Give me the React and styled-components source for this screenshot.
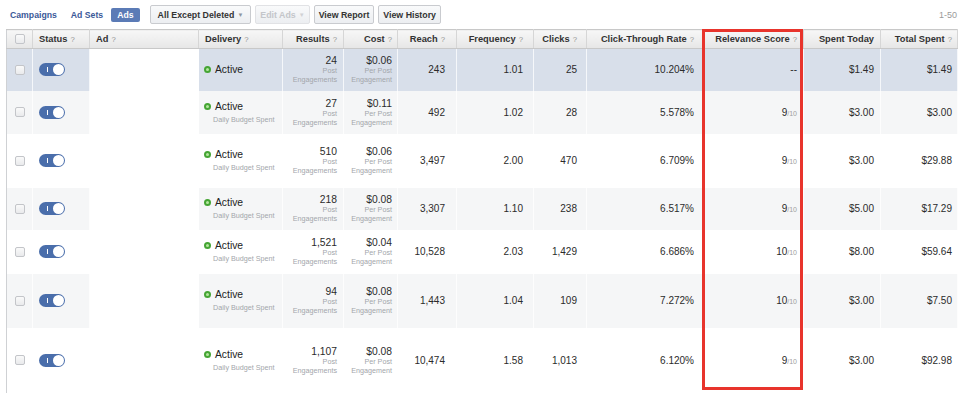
import React from 'react'
import styled, { createGlobalStyle } from 'styled-components'

const GlobalStyle = createGlobalStyle`
  body {
    margin: 0;
    background: #fff;
    font-family: "Liberation Sans", Arial, Helvetica, sans-serif;
    color: #333;
  }
`

const Page = styled.div`
  width: 960px;
  height: 393px;
  overflow: hidden;
  padding-left: 6px;
  box-sizing: border-box;
`

const Toolbar = styled.div`
  height: 29px;
  display: flex;
  align-items: center;
  padding-left: 4px;
  padding-right: 3px;
`

const LevelTab = styled.span`
  font-size: 8.7px;
  font-weight: bold;
  color: ${p => (p.active ? '#fff' : '#3b5998')};
  background: ${p => (p.active ? '#5b7bb6' : 'transparent')};
  border-radius: 2px;
  padding: ${p => (p.active ? '2px 6px' : '0')};
  margin-right: ${p => p.gap}px;
`

const Button = styled.span`
  display: inline-flex;
  align-items: center;
  height: 19px;
  box-sizing: border-box;
  padding: 0 ${p => p.pad || 4}px;
  margin-right: 4px;
  font-size: 8.8px;
  font-weight: bold;
  color: ${p => (p.disabled ? '#c4c6ca' : '#333')};
  background: linear-gradient(#f9fafb, #eceef1);
  border: 1px solid ${p => (p.disabled ? '#e1e2e5' : '#c9cbcf')};
  border-radius: 2px;
`

const Caret = styled.span`
  font-size: 6px;
  margin-left: 3px;
  color: ${p => (p.disabled ? '#d0d1d4' : '#8d949e')};
`

const Paging = styled.span`
  margin-left: auto;
  font-size: 9px;
  color: #9a9a9a;
`

const TableWrap = styled.div`
  position: relative;
  width: 951px;
`

const Table = styled.table`
  width: 951px;
  table-layout: fixed;
  border-collapse: collapse;
  border-left: 1px solid #cfd1d4;
`

const HeadCell = styled.th`
  height: 18px;
  padding: 0 ${p => p.pr || 6}px 0 ${p => p.pl || 6}px;
  text-align: ${p => p.align || 'right'};
  font-size: 9.3px;
  font-weight: bold;
  color: #333;
  white-space: nowrap;
  background: linear-gradient(#f7f7f7, #e6e6e6);
  border-top: 1px solid #c8c8c8;
  border-bottom: 1px solid #c8c8c8;
  border-right: 1px solid #d6d6d6;
`

const Help = styled.span`
  font-weight: normal;
  font-size: 7.8px;
  color: #959595;
  margin-left: 3px;
`

const Row = styled.tr`
  height: ${p => p.h}px;
  background: ${p => (p.selected ? '#d8dfea' : p.shade ? '#f5f6f7' : '#fff')};
`

const Cell = styled.td`
  padding: 0 ${p => p.pr || 6}px 0 ${p => p.pl || 6}px;
  text-align: ${p => p.align || 'right'};
  vertical-align: middle;
  font-size: 10px;
  color: #2b2b2b;
  white-space: nowrap;
  border-right: 1px solid rgba(255, 255, 255, 0.75);
  background: ${p => (p.blank ? '#fff' : 'transparent')};
`

const Check = styled.span`
  display: block;
  width: 8px;
  height: 8px;
  margin: 0 auto;
  border: 1px solid #c3c5c9;
  border-radius: 2px;
  background: linear-gradient(#fafafa, #e9eaec);
`

const Toggle = styled.span`
  position: relative;
  display: block;
  width: 26px;
  height: 13px;
  border-radius: 7px;
  background: #4a6eab;
  &::before {
    content: '';
    position: absolute;
    left: 8px;
    top: 4px;
    width: 1px;
    height: 5px;
    background: #fff;
  }
  &::after {
    content: '';
    position: absolute;
    right: 1px;
    top: 1px;
    width: 11px;
    height: 11px;
    border-radius: 50%;
    background: #fff;
  }
`

const Status = styled.div`
  display: flex;
  align-items: center;
  font-size: 10.3px;
  color: #222;
`

const Dot = styled.span`
  width: 3px;
  height: 3px;
  border-radius: 50%;
  background: #b5e6a0;
  border: 2px solid #45a534;
  margin-right: 4px;
`

const SubNote = styled.div`
  font-size: 7.2px;
  line-height: 9px;
  color: #a3a6ab;
  margin-top: ${p => p.gap || 0}px;
  padding-left: ${p => p.indent || 0}px;
`

const Main = styled.div`
  font-size: 10.3px;
  line-height: 11px;
`

const Score = styled.span`
  font-size: 10px;
`

const OutOf = styled.span`
  font-size: 7px;
  color: #a0a0a0;
`

const Highlight = styled.div`
  position: absolute;
  left: 696px;
  top: 0;
  width: 101px;
  height: 361px;
  border: 3px solid #e8342c;
  box-sizing: border-box;
  pointer-events: none;
`

const columns = [
  { key: 'check', w: 26, align: 'center' },
  { key: 'status', w: 57, label: 'Status', align: 'left', help: true },
  { key: 'ad', w: 109, label: 'Ad', align: 'left', help: true },
  { key: 'delivery', w: 84, label: 'Delivery', align: 'left', help: true },
  { key: 'results', w: 61, label: 'Results', help: true, pr: 6 },
  { key: 'cost', w: 54, label: 'Cost', help: true, pr: 5 },
  { key: 'reach', w: 59, label: 'Reach', help: true, pr: 11 },
  { key: 'freq', w: 77, label: 'Frequency', help: true, pr: 10 },
  { key: 'clicks', w: 53, label: 'Clicks', help: true, pr: 9 },
  { key: 'ctr', w: 117, label: 'Click-Through Rate', help: true, pr: 9 },
  { key: 'rel', w: 100, label: 'Relevance Score', help: true, pr: 6 },
  { key: 'today', w: 77, label: 'Spent Today', pr: 6 },
  { key: 'total', w: 77, label: 'Total Spent', help: true, pr: 5 },
]

const rows = [
  { h: 42, selected: true, results: '24', cost: '$0.06', reach: '243', freq: '1.01', clicks: '25', ctr: '10.204%', rel: null, today: '$1.49', total: '$1.49', budget: false },
  { h: 43, shade: true, results: '27', cost: '$0.11', reach: '492', freq: '1.02', clicks: '28', ctr: '5.578%', rel: 9, today: '$3.00', total: '$3.00', budget: true },
  { h: 54, results: '510', cost: '$0.06', reach: '3,497', freq: '2.00', clicks: '470', ctr: '6.709%', rel: 9, today: '$3.00', total: '$29.88', budget: true },
  { h: 42, shade: true, results: '218', cost: '$0.08', reach: '3,307', freq: '1.10', clicks: '238', ctr: '6.517%', rel: 9, today: '$5.00', total: '$17.29', budget: true },
  { h: 44, results: '1,521', cost: '$0.04', reach: '10,528', freq: '2.03', clicks: '1,429', ctr: '6.686%', rel: 10, today: '$8.00', total: '$59.64', budget: true },
  { h: 54, shade: true, results: '94', cost: '$0.08', reach: '1,443', freq: '1.04', clicks: '109', ctr: '7.272%', rel: 10, today: '$3.00', total: '$7.50', budget: true },
  { h: 65, results: '1,107', cost: '$0.08', reach: '10,474', freq: '1.58', clicks: '1,013', ctr: '6.120%', rel: 9, today: '$3.00', total: '$92.98', budget: true },
]

const col = key => columns.find(c => c.key === key)

const AdRow = ({ r }) => (
  <Row h={r.h} selected={r.selected} shade={r.shade}>
    <Cell align="center" pl={0} pr={0}><Check /></Cell>
    <Cell align="left"><Toggle /></Cell>
    <Cell blank />
    <Cell align="left" pl={5}>
      <Status><Dot />Active</Status>
      {r.budget && <SubNote gap={3} indent={9}>Daily Budget Spent</SubNote>}
    </Cell>
    <Cell pr={col('results').pr}>
      <Main>{r.results}</Main>
      <SubNote>Post</SubNote>
      <SubNote>Engagements</SubNote>
    </Cell>
    <Cell pr={col('cost').pr}>
      <Main>{r.cost}</Main>
      <SubNote>Per Post</SubNote>
      <SubNote>Engagement</SubNote>
    </Cell>
    <Cell pr={col('reach').pr}>{r.reach}</Cell>
    <Cell pr={col('freq').pr}>{r.freq}</Cell>
    <Cell pr={col('clicks').pr}>{r.clicks}</Cell>
    <Cell pr={col('ctr').pr}>{r.ctr}</Cell>
    <Cell pr={col('rel').pr}>
      {r.rel == null ? '--' : <><Score>{r.rel}</Score><OutOf>/10</OutOf></>}
    </Cell>
    <Cell pr={col('today').pr}>{r.today}</Cell>
    <Cell pr={col('total').pr}>{r.total}</Cell>
  </Row>
)

export default function App() {
  return (
    <Page>
      <GlobalStyle />
      <Toolbar>
        <LevelTab gap={14}>Campaigns</LevelTab>
        <LevelTab gap={8}>Ad Sets</LevelTab>
        <LevelTab active gap={10}>Ads</LevelTab>
        <Button pad={7}>All Except Deleted<Caret>▼</Caret></Button>
        <Button disabled pad={4}>Edit Ads<Caret disabled>▼</Caret></Button>
        <Button>View Report</Button>
        <Button>View History</Button>
        <Paging>1-50</Paging>
      </Toolbar>
      <TableWrap>
        <Table>
          <colgroup>
            {columns.map(c => <col key={c.key} style={{ width: c.w }} />)}
          </colgroup>
          <thead>
            <tr>
              {columns.map(c => (
                <HeadCell key={c.key} align={c.align} pr={c.pr} pl={c.key === 'check' ? 0 : 6}>
                  {c.key === 'check' ? <Check /> : c.label}
                  {c.help && <Help>?</Help>}
                </HeadCell>
              ))}
            </tr>
          </thead>
          <tbody>
            {rows.map((r, i) => <AdRow key={i} r={r} />)}
          </tbody>
        </Table>
        <Highlight />
      </TableWrap>
    </Page>
  )
}
